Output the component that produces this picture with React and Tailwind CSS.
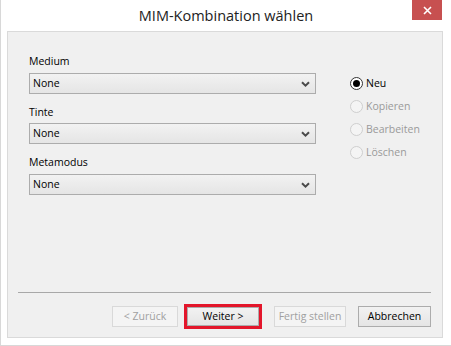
const Chevron = () => (
  <svg width="9" height="6" viewBox="0 0 9 6" className="text-[#4a4a4a]">
    <path d="M1 1.2 L4.5 4.6 L8 1.2" fill="none" stroke="currentColor" strokeWidth="2" />
  </svg>
);

const Select = ({ value }) => (
  <div className="flex h-[21px] w-[287px] items-center justify-between border border-[#acacac] bg-gradient-to-b from-[#f2f2f2] to-[#e5e5e5] pl-[3px] pr-[5px] text-black">
    <span>{value}</span>
    <Chevron />
  </div>
);

const Radio = ({ label, checked }) => (
  <div className="flex h-[23px] items-center gap-[3px]">
    {checked ? (
      <span className="flex h-[13px] w-[13px] items-center justify-center rounded-full border border-[#333] bg-white">
        <span className="h-[7px] w-[7px] rounded-full bg-black" />
      </span>
    ) : (
      <span className="h-[13px] w-[13px] rounded-full border border-[#cfcfcf] bg-[#f4f4f4]" />
    )}
    <span className={checked ? "text-black" : "text-[#9a9a9a]"}>{label}</span>
  </div>
);

export default function App() {
  return (
    <div
      className="flex h-[346px] w-[451px] flex-col border-b border-l border-[#d8d8d8] bg-white text-[10.5px]"
      style={{ fontFamily: '"Open Sans", "Noto Sans", sans-serif' }}
    >
      {/* TITLE BAR */}
      <div className="relative flex h-[31px] shrink-0 items-center justify-center">
        <span className="text-[14.5px] text-[#222]">MIM-Kombination wählen</span>
        <div className="absolute right-[9px] top-0 flex h-[20px] w-[30px] items-center justify-center bg-[#c75050]">
          <svg width="9" height="9" viewBox="0 0 9 9">
            <path d="M1 1 L8 8 M8 1 L1 8" stroke="white" strokeWidth="1.6" />
          </svg>
        </div>
      </div>

      {/* PANEL */}
      <div className="ml-[6px] mr-[8px] flex h-[307px] flex-col border border-[#dadada] bg-[#f0f0f0]">
        <div className="flex pl-[21px] pt-[23px]">
          <div className="flex flex-col">
            <span className="h-[15px] leading-[12px] text-black">Medium</span>
            <div className="mt-[3px]">
              <Select value="None" />
            </div>
            <span className="mt-[12px] h-[15px] leading-[12px] text-black">Tinte</span>
            <div className="mt-[2px]">
              <Select value="None" />
            </div>
            <span className="mt-[12px] h-[15px] leading-[12px] text-black">Metamodus</span>
            <div className="mt-[3px]">
              <Select value="None" />
            </div>
          </div>

          <div className="ml-[34px] mt-[17px] flex flex-col">
            <Radio label="Neu" checked />
            <Radio label="Kopieren" />
            <Radio label="Bearbeiten" />
            <Radio label="Löschen" />
          </div>
        </div>

        <div className="flex-1" />

        <div className="ml-[10px] mr-[11px] h-px bg-[#a8a8a8]" />

        <div className="mb-[8px] mr-[11px] mt-[11px] flex h-[25px] items-center justify-end">
          <div className="flex h-[21px] w-[66px] items-center justify-center border border-[#d9d9d9] bg-[#f4f4f4] text-[#a0a0a0]">
            &lt; Zurück
          </div>
          <div className="ml-[6px] flex h-[25px] w-[78px] border-[3px] border-[#e3162b] bg-white">
            <div className="flex flex-1 items-center justify-center border border-[#acacac] bg-gradient-to-b from-[#f2f2f2] to-[#e5e5e5] text-black">
              Weiter &gt;
            </div>
          </div>
          <div className="ml-[12px] flex h-[21px] w-[72px] items-center justify-center border border-[#d9d9d9] bg-[#f4f4f4] text-[#a0a0a0]">
            Fertig stellen
          </div>
          <div className="ml-[12px] flex h-[21px] w-[73px] items-center justify-center border border-[#acacac] bg-gradient-to-b from-[#f2f2f2] to-[#e5e5e5] text-black">
            Abbrechen
          </div>
        </div>
      </div>
    </div>
  );
}
